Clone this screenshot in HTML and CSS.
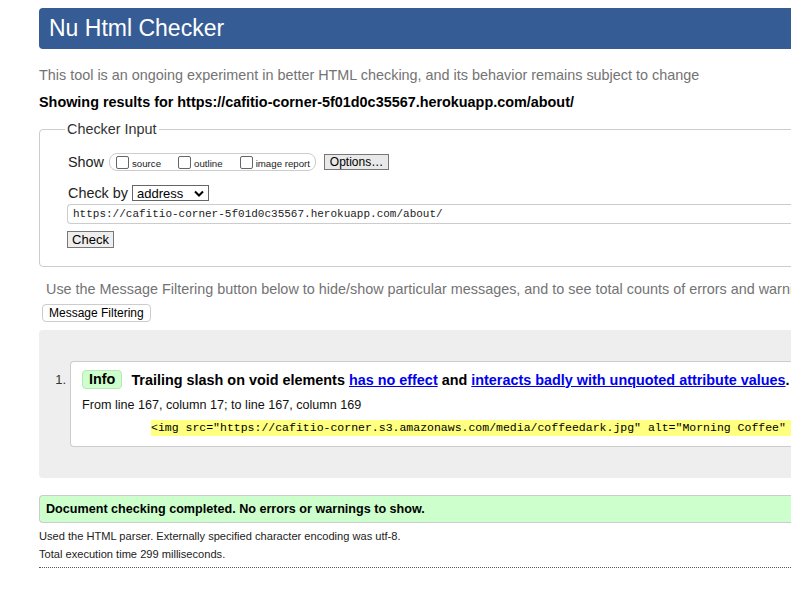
FILE: index.html
```html
<!DOCTYPE html>
<html lang="en">
<head>
<meta charset="utf-8">
<title>Nu Html Checker</title>
<link rel="stylesheet" href="styles.css">
</head>
<body>
<div class="page">
  <h1 class="banner">Nu Html Checker</h1>
  <p class="intro">This tool is an ongoing experiment in better HTML checking, and its behavior remains subject to change</p>
  <p class="showing">Showing results for https://cafitio-corner-5f01d0c35567.herokuapp.com/about/</p>

  <fieldset class="input-box">
    <legend>Checker Input</legend>
    <div class="row show-row">
      <span class="lbl">Show</span>
      <span class="opts">
        <label class="opt"><span class="cb"></span>source</label>
        <label class="opt"><span class="cb"></span>outline</label>
        <label class="opt"><span class="cb"></span>image report</label>
      </span>
      <span class="btn opt-btn">Options…</span>
    </div>
    <div class="row by-row">
      <span class="lbl">Check by</span>
      <span class="select">address<svg width="10" height="7" viewBox="0 0 10 7"><path d="M1 1.5 L5 5.5 L9 1.5" fill="none" stroke="#000" stroke-width="2"/></svg></span>
    </div>
    <div class="url">https://cafitio-corner-5f01d0c35567.herokuapp.com/about/</div>
    <div class="row check-row"><span class="btn check-btn">Check</span></div>
  </fieldset>

  <p class="filter-note">Use the Message Filtering button below to hide/show particular messages, and to see total counts of errors and warnings.</p>
  <div class="filter-row"><span class="btn round">Message Filtering</span></div>

  <div class="results">
    <ol class="msgs">
      <li class="msg">
        <span class="num">1.</span>
        <div class="msg-box">
          <p class="msg-title"><span class="badge">Info</span><span class="msg-text">Trailing slash on void elements <a href="#">has no effect</a> and <a href="#">interacts badly with unquoted attribute values</a>.</span></p>
          <p class="loc">From line 167, column 17; to line 167, column 169</p>
          <p class="extract"><code>&lt;img src="https://cafitio-corner.s3.amazonaws.com/media/coffeedark.jpg" alt="Morning Coffee" class="img-fluid"&gt;</code></p>
        </div>
      </li>
    </ol>
  </div>

  <p class="success">Document checking completed. No errors or warnings to show.</p>
  <p class="stats">Used the HTML parser. Externally specified character encoding was utf-8.</p>
  <p class="stats">Total execution time 299 milliseconds.</p>
  <div class="rule"></div>
</div>
</body>
</html>
```
FILE: styles.css
```css
html, body {
  margin: 0;
  padding: 0;
  overflow: hidden;
  background: #fff;
}
body {
  font-family: "Liberation Sans", Arial, sans-serif;
  font-size: 14.4px;
  color: #000;
}
.page {
  margin-left: 39px;
  padding-top: 8px;
  width: 1000px;
}
.banner {
  margin: 0;
  height: 41px;
  box-sizing: border-box;
  background: #365c95;
  color: #fff;
  font-weight: normal;
  font-size: 23px;
  line-height: 41px;
  padding-left: 10px;
  border-radius: 4px;
}
.intro {
  margin: 18px 0 0;
  color: #737373;
  line-height: 17px;
}
.showing {
  margin: 10px 0 0;
  font-weight: bold;
  line-height: 17px;
}
.input-box {
  margin: 11px 0 0;
  border: 1px solid #ccc;
  border-radius: 4px;
  padding: 6px 0 18px 28px;
}
.input-box legend {
  padding: 0 2px;
  margin-left: -3px;
  line-height: 15px;
  color: #333;
}
.row {
  display: flex;
  align-items: center;
}
.show-row {
  height: 17px;
  margin-top: 10px;
}
.lbl {
  color: #222;
  margin-right: 5px;
}
.opts {
  display: flex;
  align-items: center;
  height: 16px;
  border: 1px solid #ccc;
  border-radius: 8px;
  padding: 0 5px 0 6px;
  gap: 17px;
  font-size: 9.7px;
  color: #222;
}
.opt {
  display: flex;
  align-items: flex-end;
  gap: 3px;
  line-height: 11px;
  padding-top: 1px;
}
.cb {
  width: 11px;
  height: 11px;
  border: 1px solid #666;
  border-radius: 2px;
  background: #fff;
}
.btn {
  display: inline-flex;
  align-items: center;
  height: 16px;
  padding: 0 6px;
  border: 1px solid #777;
  background: #e9e9e9;
  font-size: 13px;
  color: #000;
  box-sizing: border-box;
}
.opt-btn {
  margin-left: 8px;
  width: 65px;
  justify-content: center;
  padding: 0;
  font-size: 12px;
}
.by-row {
  margin-top: 15px;
}
.select {
  display: inline-flex;
  align-items: center;
  justify-content: space-between;
  width: 77px;
  height: 16px;
  box-sizing: border-box;
  border: 1px solid #666;
  padding: 0 4px 0 4px;
  font-size: 13px;
  margin-left: -1px;
}
.url {
  margin-top: 3px;
  margin-left: -1px;
  height: 20px;
  box-sizing: border-box;
  border: 1px solid #ccc;
  border-right: none;
  border-radius: 4px 0 0 4px;
  padding-left: 5px;
  font-family: "Liberation Mono", "DejaVu Sans Mono", monospace;
  font-size: 11px;
  line-height: 18px;
  color: #222;
}
.check-row {
  margin-top: 7px;
}
.check-btn {
  margin-left: -1px;
  height: 17px;
  width: 47px;
  justify-content: center;
  padding: 0;
  background: #eee;
}
.filter-note {
  margin: 14px 0 0 7px;
  color: #737373;
  line-height: 17px;
}
.filter-row {
  margin-top: 6px;
  margin-left: 3px;
}
.btn.round {
  height: 18px;
  font-size: 12px;
  border: 1px solid #ccc;
  border-radius: 4px;
  background: #fff;
  padding: 0 6px;
}
.results {
  margin-top: 8px;
  background: #eee;
  border-radius: 4px;
  padding: 31px 0 31px;
}
.msgs {
  margin: 0;
  padding: 0;
  list-style: none;
}
.msg {
  display: flex;
  align-items: flex-start;
}
.num {
  width: 31px;
  box-sizing: border-box;
  text-align: right;
  padding-right: 4px;
  padding-top: 11px;
  font-size: 13px;
  color: #333;
}
.msg-box {
  flex: 1;
  background: #fff;
  border: 1px solid #ccc;
  border-right: none;
  border-radius: 4px 0 0 4px;
  padding: 8px 0 10px 11px;
}
.msg-title {
  margin: 0;
  display: flex;
  align-items: center;
  font-weight: bold;
}
.badge {
  display: inline-block;
  height: 19px;
  line-height: 17px;
  box-sizing: border-box;
  padding: 0 6px;
  background: #ccffcc;
  border: 1px solid #b8e8b8;
  border-radius: 4px;
  margin-right: 9px;
}
.msg-text a {
  color: #00e;
  text-decoration: underline;
}
.loc {
  margin: 9px 0 0;
  font-size: 12.6px;
  line-height: 15px;
  color: #111;
}
.extract {
  margin: 5px 0 0 69px;
  white-space: nowrap;
  line-height: 16px;
}
.extract code {
  display: inline-block;
  background: #ffff80;
  font-family: "Liberation Mono", "DejaVu Sans Mono", monospace;
  font-size: 11.5px;
  line-height: 16px;
}
.success {
  margin: 17px 0 0;
  background: #ccffcc;
  border: 1px solid #ccc;
  border-right: none;
  border-radius: 4px 0 0 4px;
  padding: 0 6px;
  height: 28px;
  box-sizing: border-box;
  line-height: 26px;
  font-weight: bold;
  font-size: 12.6px;
}
.stats {
  margin: 7px 0 0;
  font-size: 11.1px;
  line-height: 13px;
  color: #222;
}
.stats + .stats { margin-top: 5px; }
.rule {
  margin-top: 6px;
  border-top: 1px dotted #555;
}
```
